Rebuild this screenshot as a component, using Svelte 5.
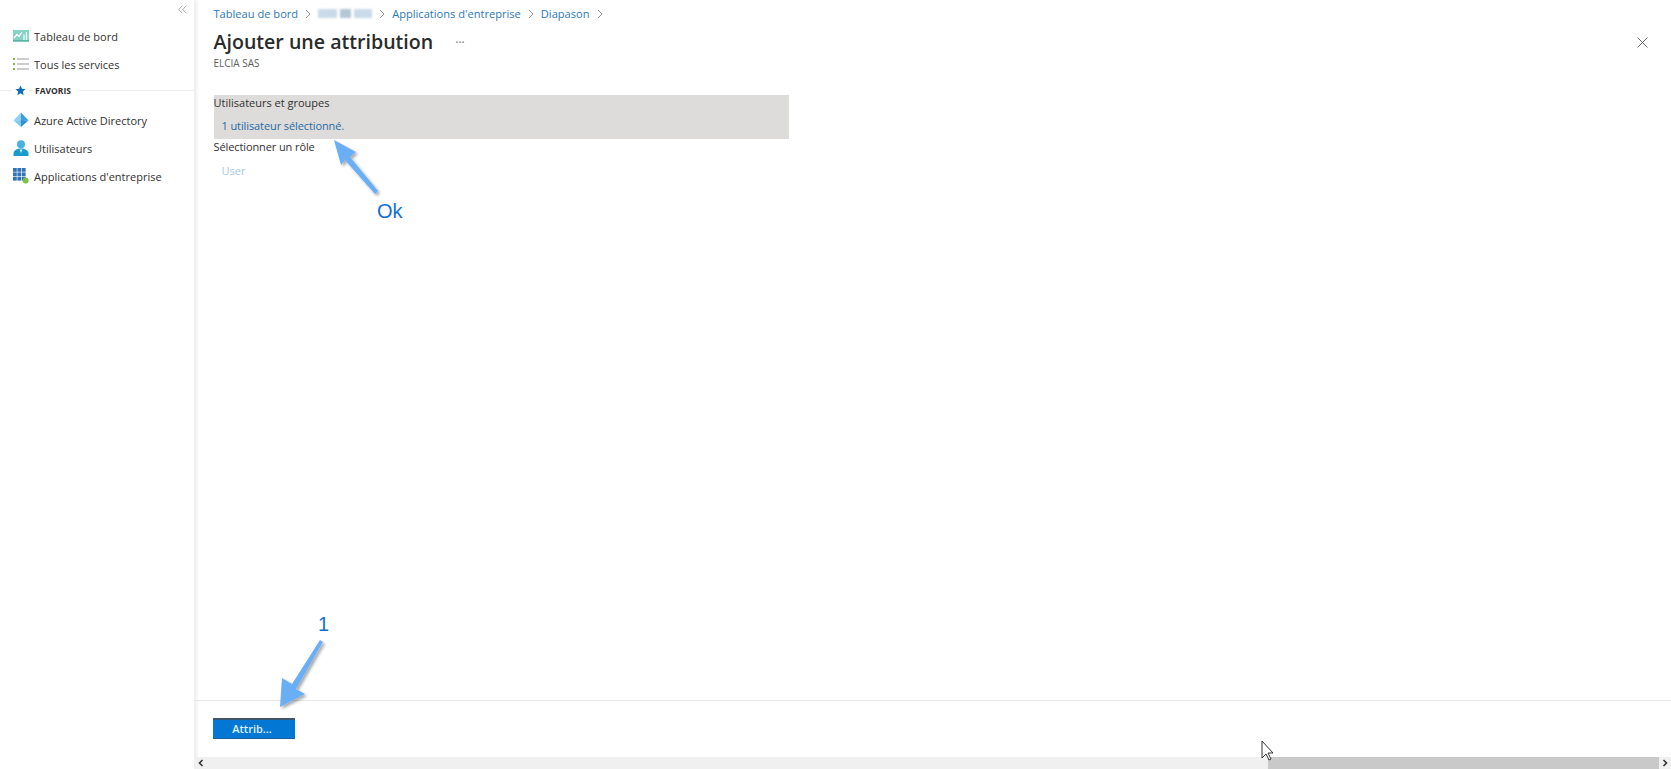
<script>
	const nav = [
		{ label: 'Tableau de bord', icon: 'dash' },
		{ label: 'Tous les services', icon: 'list' }
	];
	const favs = [
		{ label: 'Azure Active Directory', icon: 'aad' },
		{ label: 'Utilisateurs', icon: 'user' },
		{ label: "Applications d'entreprise", icon: 'apps' }
	];
	const appCells = [0, 1, 2].flatMap((r) => [0, 1, 2].map((c) => ({ x: c * 4.4, y: r * 4.4 })));
</script>

{#snippet icon(name)}
	<svg class="nav-icon" width="16" height="16" viewBox="0 0 16 16">
		{#if name === 'dash'}
			<rect y="2" width="16" height="11.500" fill="#86d3c6" />
			<path d="M1 10l3-3.500 2 2L9 4M11 6.500V12M13.500 4v8" fill="none" stroke="#fff" stroke-width="1.200" />
			<rect y="12" width="16" height="1.600" fill="#5bb5a6" />
		{:else if name === 'list'}
			<path d="M4 3h12M4 8h12M4 13h12" stroke="#9a9a9a" stroke-width="1.100" />
			<path d="M0 3h2M0 8h2M0 13h2" stroke="#86b83f" stroke-width="1.800" />
		{:else if name === 'aad'}
			<path d="M8 0.500L0.500 8.500 8 8z" fill="#8fd3f4" />
			<path d="M8 0.500L15.500 8.500 8 8z" fill="#3c9ed8" />
			<path d="M15.500 8.500L8 8v7z" fill="#2f8fd0" />
			<path d="M0.500 8.500L8 8v7z" fill="#7ccbf0" />
		{:else if name === 'user'}
			<circle cx="8" cy="4.200" r="4" fill="#45b4e0" />
			<path d="M0.500 16v-2.500C0.500 10.500 4 8.500 8 8.500s7.500 2 7.500 5V16z" fill="#1b9bc9" />
			<path d="M6.500 9.500h3L8 13z" fill="#d8f0fa" />
		{:else}
			{#each appCells as c}
				<rect x={c.x} y={c.y} width="3.800" height="3.800" fill="#3273b8" />
			{/each}
			<circle cx="12.600" cy="12.600" r="3" fill="#7cc142" />
		{/if}
	</svg>
{/snippet}

{#snippet chevron()}
	<svg class="sep" width="6" height="10" viewBox="0 0 6 10"><path d="M1 1l4 4-4 4" fill="none" stroke="#8a8a8a" stroke-width=".9" /></svg>
{/snippet}

<div class="page">
	<aside class="sidebar">
		<div class="collapse">
			<svg width="9" height="9" viewBox="0 0 9 9"><path d="M4.200 .8L.8 4.500l3.400 3.700M8.200 .8L4.800 4.500l3.400 3.700" fill="none" stroke="#9aa0a6" stroke-width=".9" /></svg>
		</div>
		<ul class="menu">
			{#each nav as item}
				<li>{@render icon(item.icon)}<span>{item.label}</span></li>
			{/each}
		</ul>
		<div class="fav-head">
			<svg width="11" height="11" viewBox="0 0 12 12"><path d="M6 .6l1.600 3.600 3.900.4-2.900 2.600.8 3.900L6 9.100l-3.400 2 .8-3.900L.5 4.600l3.900-.4z" fill="#0f6cbd" /></svg>
			<b>FAVORIS</b>
		</div>
		<ul class="menu">
			{#each favs as item}
				<li>{@render icon(item.icon)}<span>{item.label}</span></li>
			{/each}
		</ul>
	</aside>

	<main class="blade">
		<div class="content">
			<nav class="crumbs">
				<a href="#a">Tableau de bord</a>{@render chevron()}
				<span class="blur"><s></s><s class="short"></s><s></s></span>{@render chevron()}
				<a href="#a">Applications d'entreprise</a>{@render chevron()}
				<a href="#a">Diapason</a>{@render chevron()}
			</nav>
			<header class="head">
				<div>
					<div class="title-row">
						<h1>Ajouter une attribution</h1>
						<span class="dots">···</span>
					</div>
					<p class="sub">ELCIA SAS</p>
				</div>
				<svg class="close" width="11" height="11" viewBox="0 0 11 11"><path d="M.5 .5l10 10M10.500 .5l-10 10" stroke="#555" stroke-width=".9" /></svg>
			</header>

			<section class="form">
				<div class="picked">
					<div class="lbl">Utilisateurs et groupes</div>
					<div class="val link">1 utilisateur sélectionné.</div>
				</div>
				<div class="lbl role">Sélectionner un rôle</div>
				<div class="val muted">User</div>
			</section>
		</div>

		<footer class="foot">
			<button>Attrib...</button>
		</footer>

		<div class="hscroll">
			<svg class="arrow" width="12" height="12" viewBox="0 0 12 12"><path d="M7.500 3L4.500 6l3 3" fill="none" stroke="#333" stroke-width="1.600" /></svg>
			<div class="track"><div class="thumb"></div></div>
			<svg class="arrow" width="12" height="12" viewBox="0 0 12 12"><path d="M4.500 3l3 3-3 3" fill="none" stroke="#333" stroke-width="1.600" /></svg>
		</div>
	</main>

	<!-- annotations drawn on top of the screenshot -->
	<svg class="marks" width="1671" height="769">
		<defs>
			<filter id="sh" x="-30%" y="-30%" width="160%" height="160%">
				<feDropShadow dx="2" dy="2" stdDeviation="1.600" flood-color="#000" flood-opacity=".35" />
			</filter>
		</defs>
		<g fill="#6aaef5" filter="url(#sh)">
			<path d="M334 140L356 152 350 157 378 191 375 194 345 160 341 165z" />
			<path d="M320 640L323 642 296 689 305 694 280 707 282 678 292 684z" />
		</g>
		<path d="M1262 741v17l4-4 3 6 2-1-3-6h5z" fill="#fff" stroke="#333" stroke-width="1" />
	</svg>
	<span class="note ok">Ok</span>
	<span class="note one">1</span>
</div>

<style>
	:global(body) {
		margin: 0;
		background: #fff;
	}
	.page {
		display: flex;
		position: relative;
		width: 1671px;
		height: 769px;
		overflow: hidden;
		font-family: "Open Sans", "Noto Sans", sans-serif;
		font-size: 11px;
		color: #323130;
	}
	.sidebar {
		width: 195px;
		flex: none;
		box-sizing: border-box;
		border-right: 1px solid #f0f0f0;
		box-shadow: 2px 0 3px #eeeeee;
	}
	.collapse {
		display: flex;
		justify-content: flex-end;
		height: 22px;
		padding: 5px 7px 0 0;
		box-sizing: border-box;
	}
	.menu {
		list-style: none;
		margin: 0;
		padding: 0;
	}
	.menu li {
		display: flex;
		align-items: center;
		gap: 5px;
		height: 28px;
		padding-left: 13px;
	}
	.nav-icon {
		flex: none;
	}
	.fav-head {
		display: flex;
		align-items: center;
		gap: 9px;
		height: 25px;
		padding-left: 15px;
		margin-bottom: 3px;
		background: linear-gradient(#eeeeee, #eeeeee) 0 50% / 100% 1px no-repeat;
		font-size: 8.500px;
	}
	.fav-head svg {
		background: #fff;
		box-shadow: 0 0 0 3px #fff;
	}
	.fav-head b {
		background: #fff;
		padding-right: 6px;
		margin-left: -2px;
		padding-left: 2px;
		font-weight: 700;
	}
	.blade {
		flex: 1;
		display: flex;
		flex-direction: column;
		min-width: 0;
	}
	.content {
		flex: 1;
		padding: 6px 18px 0 18.500px;
	}
	.crumbs {
		display: flex;
		align-items: center;
		height: 15px;
		gap: 7px;
		font-size: 11.100px;
	}
	.crumbs a {
		color: #2b79b8;
		text-decoration: none;
	}
	.blur {
		display: flex;
		gap: 3px;
		width: 54px;
		filter: blur(1px);
	}
	.blur s {
		flex: 1;
		height: 9px;
		background: #c9dbe8;
	}
	.blur .short {
		flex: .6;
		background: #b3c7d6;
	}
	.head {
		display: flex;
		justify-content: space-between;
		align-items: flex-start;
		margin-top: 7px;
	}
	.title-row {
		display: flex;
		align-items: center;
		gap: 22px;
	}
	h1 {
		margin: 0;
		font-size: 19.600px;
		line-height: 28px;
		font-weight: 600;
		color: #2b2b2b;
	}
	.dots {
		color: #777;
		font-size: 12px;
		font-weight: 400;
	}
	.sub {
		margin: 0;
		font-size: 10px;
		line-height: 14px;
		color: #605e5c;
	}
	.close {
		margin-top: 9px;
		margin-right: 5px;
	}
	.form {
		margin-top: 25px;
		width: 575px;
	}
	.picked {
		display: flow-root;
		background: #dedcdb;
		height: 44px;
	}
	.lbl {
		height: 17px;
		line-height: 17px;
	}
	.picked .lbl {
		margin-top: -1px;
	}
	.picked .val {
		padding-top: 6px;
	}
	.val {
		padding-left: 8px;
		line-height: 17px;
	}
	.role {
		margin-top: -1px;
		margin-bottom: 7px;
		letter-spacing: -.1px;
	}
	.link {
		color: #1f6aa5;
		letter-spacing: -.1px;
	}
	.muted {
		color: #a6c8e0;
	}
	.foot {
		height: 57px;
		box-sizing: border-box;
		border-top: 1px solid #e6e6e6;
		padding: 17px 18px 0;
	}
	.foot button {
		display: block;
		width: 82px;
		height: 21px;
		padding: 0 4px 2px 0;
		border: none;
		border-top: 2px solid #40546b;
		border-bottom: 1px solid #1c5f9e;
		background: #0277d3;
		color: #dff2ff;
		font: inherit;
		font-weight: 600;
	}
	.hscroll {
		display: flex;
		align-items: center;
		height: 12px;
		background: #f0f0f0;
	}
	.arrow {
		flex: none;
	}
	.track {
		flex: 1;
		height: 100%;
		display: flex;
		justify-content: flex-end;
	}
	.thumb {
		width: 391px;
		background: #c9c9c9;
	}
	.marks {
		position: absolute;
		top: 0;
		left: 0;
		pointer-events: none;
	}
	.note {
		position: absolute;
		color: #0f6fd6;
		font-size: 20px;
		line-height: 24px;
		font-family: "Liberation Sans", sans-serif;
	}
	.ok {
		left: 377px;
		top: 199px;
	}
	.one {
		left: 318px;
		top: 612px;
	}
</style>
